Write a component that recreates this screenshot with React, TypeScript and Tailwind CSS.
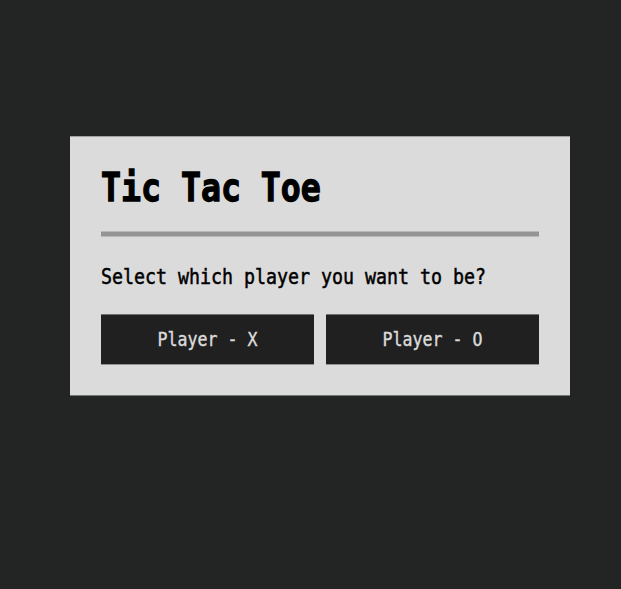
const players = ["X", "O"];

export default function App() {
  return (
    <main className="flex h-[589px] w-[621px] justify-center bg-[#232524] pt-[136px] pl-[19px] font-['DejaVu_Sans_Mono','Liberation_Mono',monospace] text-black">
      <section className="h-[260px] w-[500px] border-y border-t-[#a3a19f] border-b-[#747474] bg-[#dbdbdb] px-[31px] pt-[26px]">
        <h1 className="h-[68px] origin-[0_25px] scale-y-[1.16] text-[33.2px] leading-[50px] font-bold whitespace-pre [-webkit-text-stroke:1.1px_black]">Tic Tac Toe</h1>
        <hr className="h-[6px] border-y border-[#b8b8b8] bg-[#949494]" />
        <p className="mt-[25px] h-[28px] scale-y-[1.12] text-[18.27px] leading-[29px] whitespace-pre [-webkit-text-stroke:0.45px_black]">Select which player you want to be?</p>
        <div className="mt-[24px] grid grid-cols-2 gap-3">
          {players.map((player) => (
            <button key={player} className="h-[51px] border-y border-t-[#707070] border-b-[#929292] bg-[#202020] pt-[2px] text-[16.6px] text-[#dbdbdb]">
              <span className="inline-block scale-y-[1.12] whitespace-pre [-webkit-text-stroke:0.35px_#dbdbdb]">{"Player - " + player}</span>
            </button>
          ))}
        </div>
      </section>
    </main>
  );
}
